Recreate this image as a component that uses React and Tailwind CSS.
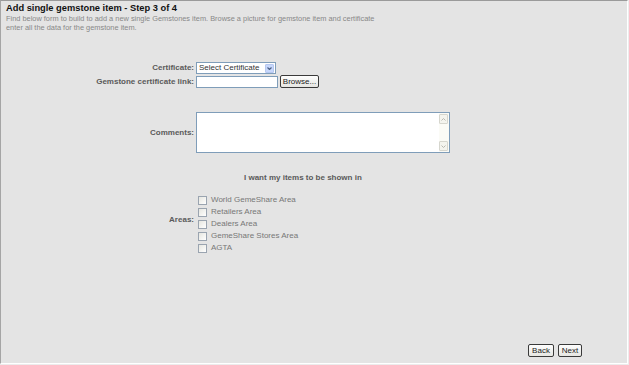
import React from "react";

const areas = [
  "World GemeShare Area",
  "Retailers Area",
  "Dealers Area",
  "GemeShare Stores Area",
  "AGTA",
];

function Label({ children }) {
  return (
    <div className="w-[194px] shrink-0 pr-[1px] text-right text-[8px] font-bold leading-[12px] text-[#5a5a5a]">
      {children}
    </div>
  );
}

function XpButton({ children, className = "" }) {
  return (
    <button
      className={`h-[13px] rounded-[2px] border border-[#3a3a3a] bg-gradient-to-b from-[#fdfdfd] to-[#e6e6e2] text-[8px] leading-[11px] text-[#222] ${className}`}
    >
      {children}
    </button>
  );
}

function ScrollArrow({ up }) {
  return (
    <div className="flex h-[10px] items-center justify-center rounded-[1px] border border-[#d6d6ce] bg-[#f4f4ee]">
      <svg width="5" height="3" viewBox="0 0 5 3">
        <path
          d={up ? "M0.5 2.5 L2.5 0.5 L4.5 2.5" : "M0.5 0.5 L2.5 2.5 L4.5 0.5"}
          fill="none"
          stroke="#b8b8b0"
          strokeWidth="1"
        />
      </svg>
    </div>
  );
}

export default function App() {
  return (
    <div className="h-[365px] w-[629px] bg-[#ececec] font-['Liberation_Sans',Arial,sans-serif]">
      <div className="flex h-[364px] w-[628px] flex-col border-t border-l border-b border-r border-t-[#9a9a9a] border-l-[#a5a5a5] border-b-white border-r-white bg-[#e4e4e4]">
        {/* Header */}
        <div className="pl-[5px] pt-[2px]">
          <h1 className="text-[9.3px] font-bold leading-[11px] text-[#111]">
            Add single gemstone item - Step 3 of 4
          </h1>
          <p className="whitespace-nowrap text-[7.4px] leading-[9px] text-[#888]">
            Find below form to build to add a new single Gemstones item. Browse
            a picture for gemstone item and certificate
            <br />
            enter all the data for the gemstone item.
          </p>
        </div>

        {/* Certificate */}
        <div className="mt-[30px] flex items-center">
          <Label>Certificate:</Label>
          <div className="ml-[1px] flex h-[12px] w-[80px] items-center border border-[#7f9db9] bg-white pl-[2px]">
            <span className="flex-1 text-[8px] leading-[10px] text-[#333]">
              Select Certificate
            </span>
            <div className="mr-[1px] flex h-[9px] w-[9px] items-center justify-center rounded-[1px] border border-[#b6c8f0] bg-[#c7d7fb]">
              <svg width="5" height="3" viewBox="0 0 5 3">
                <path
                  d="M0.5 0.5 L2.5 2.5 L4.5 0.5"
                  fill="none"
                  stroke="#4d6185"
                  strokeWidth="1.2"
                />
              </svg>
            </div>
          </div>
        </div>

        {/* Certificate link */}
        <div className="mt-[1px] flex items-center">
          <Label>Gemstone certificate link:</Label>
          <input
            type="text"
            className="ml-[1px] h-[12px] w-[82px] border border-[#7f9db9] bg-white outline-none"
          />
          <XpButton className="ml-[2px] h-[11px] w-[39px] text-[7px] leading-[9px]">
            Browse...
          </XpButton>
        </div>

        {/* Comments */}
        <div className="mt-[24px] flex items-center">
          <Label>Comments:</Label>
          <div className="ml-[1px] flex h-[41px] w-[254px] border border-[#7f9db9] bg-white">
            <textarea className="flex-1 resize-none bg-white outline-none" />
            <div className="flex w-[10px] flex-col justify-between bg-[#fbfbf6] py-[1px] pr-[1px]">
              <ScrollArrow up />
              <ScrollArrow />
            </div>
          </div>
        </div>

        {/* Areas */}
        <p className="mt-[20px] pl-[243px] text-[8px] font-bold leading-[10px] text-[#5a5a5a]">
          I want my items to be shown in
        </p>
        <div className="mt-[11px] flex items-center">
          <div className="pb-[8px]">
            <Label>Areas:</Label>
          </div>
          <div className="flex flex-col pl-[3px]">
            {areas.map((a) => (
              <label key={a} className="flex h-[12px] items-center">
                <span className="h-[9px] w-[9px] border border-[#9aa4b0] bg-gradient-to-br from-[#e6e6e0] to-white" />
                <span className="ml-[4px] text-[8px] leading-[10px] text-[#777]">
                  {a}
                </span>
              </label>
            ))}
          </div>
        </div>

        {/* Nav */}
        <div className="mt-auto flex justify-end gap-[4px] pb-[6px] pr-[45px]">
          <XpButton className="w-[26px]">Back</XpButton>
          <XpButton className="w-[24px]">Next</XpButton>
        </div>
      </div>
    </div>
  );
}
